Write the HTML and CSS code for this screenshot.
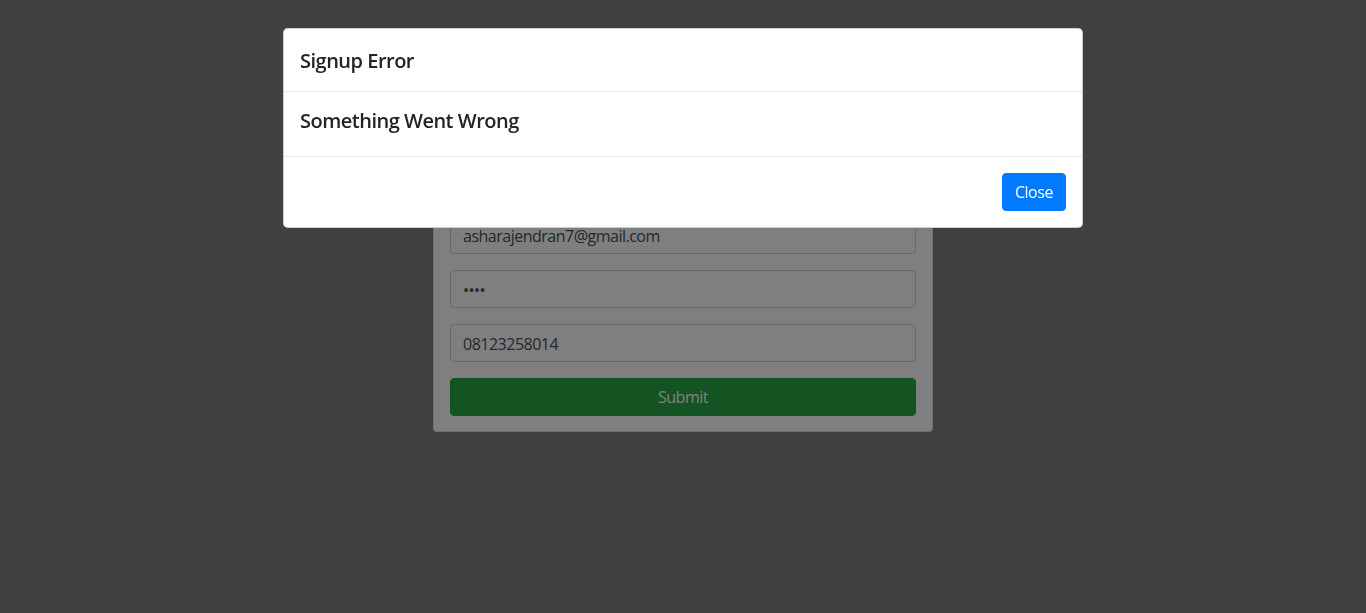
FILE: index.html
```html
<!DOCTYPE html>
<html lang="en">
<head>
<meta charset="utf-8">
<title>Signup</title>
<link rel="stylesheet" href="styles.css">
</head>
<body>
<main class="page">
  <form class="card">
    <input class="field" type="text" value="Asha Rajendran">
    <input class="field" type="email" value="asharajendran7@gmail.com">
    <input class="field" type="password" value="asha">
    <input class="field" type="text" value="08123258014">
    <button class="submit" type="button">Submit</button>
  </form>
</main>
<div class="backdrop"></div>
<div class="modal">
  <div class="dialog">
    <div class="modal-header">
      <h5 class="modal-title">Signup Error</h5>
    </div>
    <div class="modal-body">
      <h5 class="message">Something Went Wrong</h5>
    </div>
    <div class="modal-footer">
      <button class="btn-close" type="button">Close</button>
    </div>
  </div>
</div>
</body>
</html>
```

FILE: styles.css
```css
* { box-sizing: border-box; }
html, body { margin: 0; height: 100%; }
body {
  background: #808080;
  font-family: "Open Sans", "Noto Sans", sans-serif;
  font-size: 16px;
  line-height: 1.5;
  letter-spacing: -0.45px;
  color: #212529;
}
.page {
  padding-top: 145px;
}
.card {
  width: 500px;
  margin: 0 auto;
  background: #fff;
  border: 1px solid rgba(0,0,0,.125);
  border-radius: 4px;
  padding: 16px 16px 15px;
  display: flex;
  flex-direction: column;
  gap: 16px;
}
.field {
  display: block;
  width: 100%;
  height: 38px;
  padding: 7px 12px 5px;
  font: inherit;
  font-size: 16px;
  letter-spacing: -0.5px;
  color: #495057;
  background: #fff;
  border: 1px solid #ced4da;
  border-radius: 4px;
}
.submit {
  height: 38px;
  width: 100%;
  font: inherit;
  letter-spacing: inherit;
  color: #fff;
  background: #28a745;
  border: 1px solid #28a745;
  border-radius: 4px;
}
.backdrop {
  position: fixed;
  inset: 0;
  background: rgba(0,0,0,.5);
}
.modal {
  position: fixed;
  inset: 0;
  display: flex;
  justify-content: center;
  align-items: flex-start;
}
.dialog {
  width: 800px;
  margin-top: 28px;
  background: #fff;
  border: 1px solid rgba(0,0,0,.2);
  border-radius: 4.8px;
}
.modal-header {
  padding: 17px 16px 15px;
  border-bottom: 1px solid #e9ecef;
}
.modal-title {
  margin: 0;
  font-size: 20px;
  font-weight: 600;
  line-height: 1.5;
  letter-spacing: -0.5px;
}
.modal-body {
  padding: 17px 16px 15px;
  border-bottom: 1px solid #e9ecef;
}
.message {
  margin: 0 0 8px;
  font-size: 20px;
  font-weight: 600;
  line-height: 1.2;
  letter-spacing: -0.5px;
}
.modal-footer {
  padding: 16px;
  display: flex;
  justify-content: flex-end;
}
.btn-close {
  height: 38px;
  padding: 6px 12px;
  font: inherit;
  letter-spacing: inherit;
  color: #fff;
  background: #007bff;
  border: 1px solid #007bff;
  border-radius: 4px;
}
```
